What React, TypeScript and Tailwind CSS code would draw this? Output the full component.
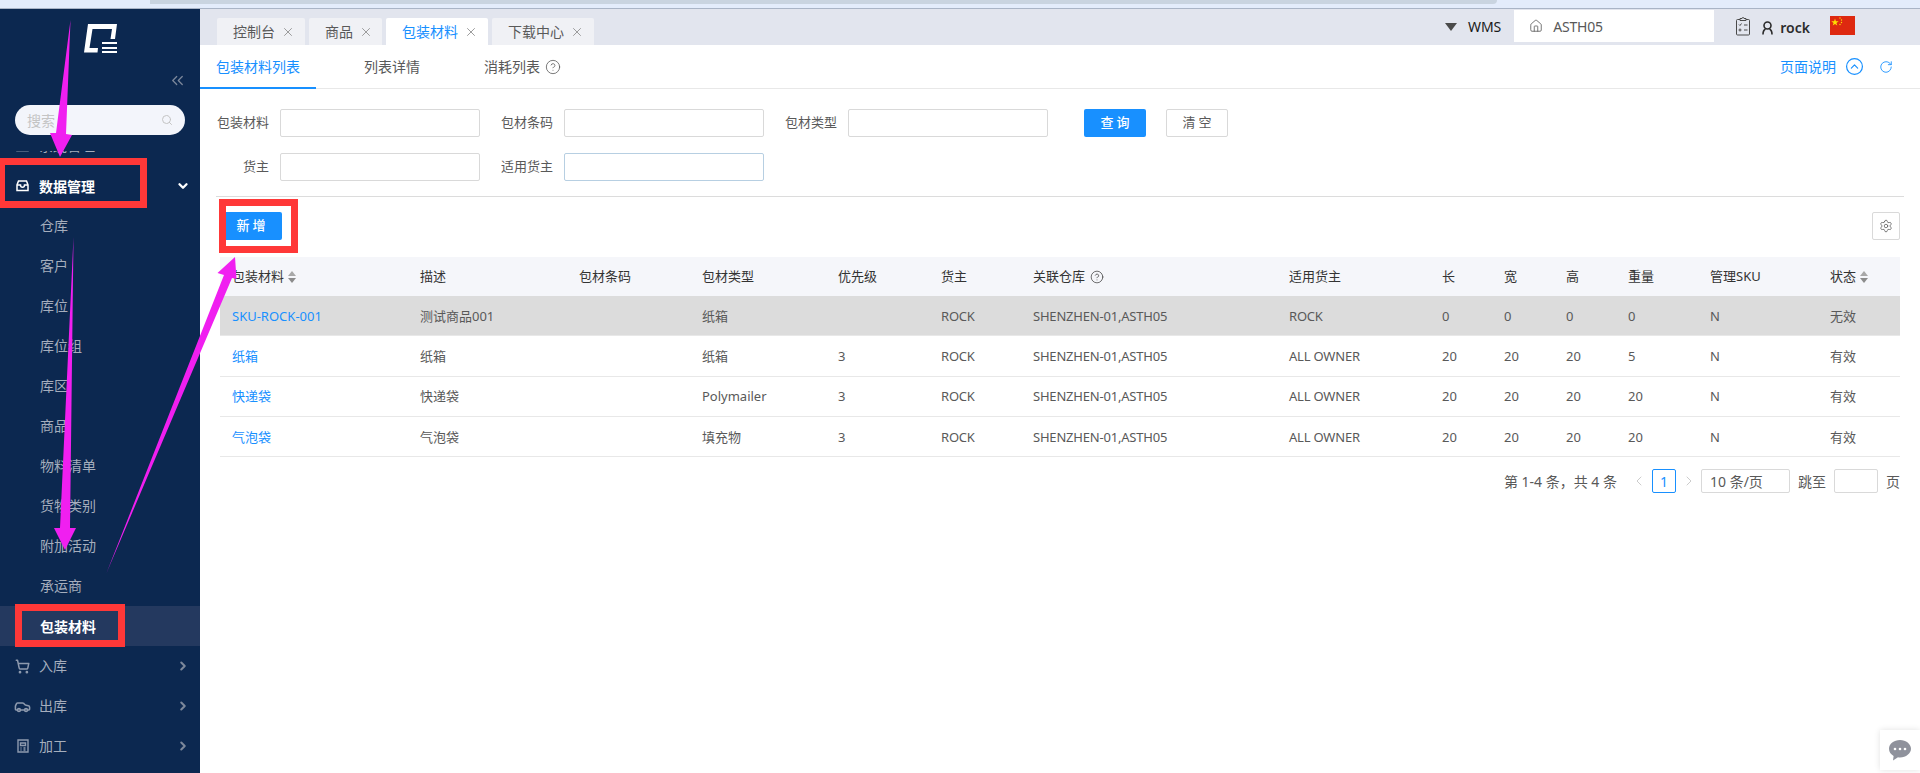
import {
  ChevronDown,
  ChevronLeft,
  ChevronRight,
  ChevronsLeft,
  CircleChevronUp,
  CircleHelp,
  House,
  RotateCw,
  Search,
  Settings,
  ShoppingCart,
  Car,
  X,
} from "lucide-react";

const tabs = [
  { label: "控制台", width: "w-[88px]" },
  { label: "商品", width: "w-[73px]" },
  { label: "包装材料", width: "w-[102px]", active: true },
  { label: "下载中心", width: "w-[102px]" },
];

const subMenu = ["仓库", "客户", "库位", "库位组", "库区", "商品", "物料清单", "货物类别", "附加活动", "承运商"];

const rowGrid =
  "grid grid-cols-[188px_159px_123px_136px_103px_92px_256px_153px_62px_62px_62px_82px_120px_82px] items-center";

const rows = [
  ["SKU-ROCK-001", "测试商品001", "", "纸箱", "", "ROCK", "SHENZHEN-01,ASTH05", "ROCK", "0", "0", "0", "0", "N", "无效"],
  ["纸箱", "纸箱", "", "纸箱", "3", "ROCK", "SHENZHEN-01,ASTH05", "ALL OWNER", "20", "20", "20", "5", "N", "有效"],
  ["快递袋", "快递袋", "", "Polymailer", "3", "ROCK", "SHENZHEN-01,ASTH05", "ALL OWNER", "20", "20", "20", "20", "N", "有效"],
  ["气泡袋", "气泡袋", "", "填充物", "3", "ROCK", "SHENZHEN-01,ASTH05", "ALL OWNER", "20", "20", "20", "20", "N", "有效"],
];

const SortCaret = () => (
  <svg width="8" height="12" viewBox="0 0 8 12" className="ml-[4px] shrink-0">
    <path d="M4 0 8 5H0Z" fill="#a8a8a8" />
    <path d="M4 12 8 7H0Z" fill="#8c8c8c" />
  </svg>
);

const Logo = () => (
  <svg width="34" height="31" viewBox="0 0 34 31">
    <path d="M4 1H33L31 16H26.500L28 6H8.500L5.500 25H14L13.500 29.500H0Z" fill="#fff" />
    <path d="M18 19H33V21H18ZM18 24H33V26H18ZM18 28H33V30H18Z" fill="#fff" />
  </svg>
);

const BoxIcon = () => (
  <svg width="13" height="12" viewBox="0 0 13 12" fill="none" stroke="#fff" strokeWidth="1.500">
    <path d="M2.500 1h8L12 5v5.500H1V5Z" />
    <path d="M1 5h3.500c0 3 4 3 4 0H12" />
  </svg>
);

const FactoryIcon = () => (
  <svg width="12" height="14" viewBox="0 0 12 14" fill="none" stroke="#8e9aae" strokeWidth="1.400">
    <path d="M1 1h10v12H1Z" />
    <path d="M3.500 4h5v2.500h-5ZM3.500 9h1M6.500 9h2M3.500 11h1M6.500 11h2" />
  </svg>
);

const ClipboardIcon = () => (
  <svg width="14" height="19" viewBox="0 0 14 19" fill="none" stroke="#4a4a4a" strokeWidth="1">
    <path d="M4 2.500H1.500a1 1 0 0 0-1 1v13.500a1 1 0 0 0 1 1h11a1 1 0 0 0 1-1V3.500a1 1 0 0 0-1-1H10" />
    <path d="M4 3.500V1.500h2a1 1 0 0 1 2 0h2v2Z" />
    <path d="M3 7.500l1 1 1.500-2M8 8h3.500M3 13a1 1 0 1 0 2 0 1 1 0 1 0-2 0M8 13h3.500" />
  </svg>
);

const UserIcon = () => (
  <svg width="11" height="14" viewBox="0 0 11 14" fill="none" stroke="#2b2b2b" strokeWidth="1.600">
    <circle cx="5.500" cy="4.500" r="3.500" />
    <path d="M1 13.500c0-3 1.500-5 2.500-5.500M10 13.500c0-3-1.500-5-2.500-5.500" />
  </svg>
);

const Flag = () => (
  <svg width="25" height="19" viewBox="0 0 25 19">
    <rect width="25" height="19" fill="#de2910" />
    <path d="M5 2.500 5.900 5.200H8.700L6.400 6.900 7.300 9.600 5 7.900 2.700 9.600 3.600 6.900 1.300 5.200H4.100Z" fill="#ffde00" />
    <circle cx="10" cy="2" r="0.700" fill="#ffde00" />
    <circle cx="11.500" cy="4" r="0.700" fill="#ffde00" />
    <circle cx="11.500" cy="6.500" r="0.700" fill="#ffde00" />
    <circle cx="10" cy="8.500" r="0.700" fill="#ffde00" />
  </svg>
);

const ChatIcon = () => (
  <svg width="22" height="21" viewBox="0 0 22 21">
    <path d="M11 0C5 0 0 3.800 0 8.800c0 3 1.800 5.600 4.600 7.200L4 20.500l5-3.300c.6.1 1.300.2 2 .2 6 0 11-3.800 11-8.600S17 0 11 0Z" fill="#8f929c" />
    <circle cx="6" cy="9" r="1.300" fill="#fff" />
    <circle cx="11" cy="9" r="1.300" fill="#fff" />
    <circle cx="16" cy="9" r="1.300" fill="#fff" />
  </svg>
);

const Field = ({ label, focused = false }: { label: string; focused?: boolean }) => (
  <div className="flex items-center">
    <label className="w-[80px] pr-[11px] text-right text-[13px] text-[#595959]">{label}</label>
    <input className={`w-[200px] h-[28px] border rounded-[2px] bg-white ${focused ? "border-[#b7cfe2]" : "border-[#d9d9d9]"}`} />
  </div>
);

const MenuRow = ({ icon, label }: { icon: React.ReactNode; label: string }) => (
  <div className="h-[40px] flex items-center text-[14px] text-[#a5aebd]">
    <span className="w-[39px] flex justify-center pl-[8px] pr-[2px]">{icon}</span>
    <span className="flex-1 pb-[1px]">{label}</span>
    <ChevronRight size={14} strokeWidth={3.500} className="mr-[10px] text-[#7d889b]" />
  </div>
);

const Sidebar = () => (
  <aside className="w-[200px] shrink-0 bg-[#0c2850] flex flex-col overflow-hidden">
    <div className="h-[57px] flex justify-center pt-[14px] pl-[1px]">
      <Logo />
    </div>
    <div className="h-[28px] flex justify-end items-center pr-[13px]">
      <ChevronsLeft size={19} strokeWidth={1.600} className="text-[#7d889b]" />
    </div>
    <div className="mt-[11px] mx-[15px] h-[30px] rounded-full bg-[#f3f5fb] flex items-center justify-between pl-[12px] pr-[12px]">
      <span className="text-[14px] text-[#c4c4c4]">搜索</span>
      <Search size={12} className="text-[#c4c4c4]" />
    </div>
    <div className="mt-[16px] flex-1 overflow-hidden">
      <div className="-mt-[25px]">
        <MenuRow icon={<BoxIcon />} label="系统管理" />
        <div className="h-[40px] flex items-center text-[14px] font-bold text-white">
          <span className="w-[39px] flex justify-center pl-[8px] pr-[2px]">
            <BoxIcon />
          </span>
          <span className="flex-1">数据管理</span>
          <ChevronDown size={14} strokeWidth={4} className="mr-[10px]" />
        </div>
        {subMenu.map((item) => (
          <div key={item} className="h-[40px] flex items-center pl-[40px] pb-[2px] text-[14px] text-[#a5aebd]">
            {item}
          </div>
        ))}
        <div className="h-[40px] flex items-center pl-[40px] text-[14px] font-bold text-white bg-[#24395f]">包装材料</div>
        <MenuRow icon={<ShoppingCart size={15} strokeWidth={2.400} className="text-[#8e9aae]" />} label="入库" />
        <MenuRow icon={<Car size={17} strokeWidth={2.200} className="text-[#8e9aae]" />} label="出库" />
        <MenuRow icon={<FactoryIcon />} label="加工" />
      </div>
    </div>
  </aside>
);

const TopBar = () => (
  <div className="h-[36px] shrink-0 bg-[#e2e5ee] flex justify-between">
    <div className="flex items-end pl-[17px] gap-[4px]">
      {tabs.map((t) => (
        <div
          key={t.label}
          className={`${t.width} h-[27px] pl-[16px] flex items-center gap-[6px] text-[14px] rounded-t-[2px] ${
            t.active ? "bg-white text-[#1890ff]" : "bg-[#f0f1f5] text-[#595959]"
          }`}
        >
          {t.label}
          <X size={14} strokeWidth={1.500} className="text-[#8f8f8f]" />
        </div>
      ))}
    </div>
    <div className="flex items-start pr-[65px]">
      <div className="mt-[14px] w-0 h-0 border-x-[6px] border-x-transparent border-t-[8px] border-t-[#4a4a4a]" />
      <span className="ml-[11px] mt-[8px] text-[14px] leading-[20px] text-[#1a1a1a]">WMS</span>
      <div className="ml-[13px] mt-[1px] w-[200px] h-[32px] bg-white flex items-center pl-[15px] gap-[10px] text-[14px] tracking-[-0.2px] text-[#595959]">
        <House size={14} strokeWidth={1.400} />
        ASTH05
      </div>
      <div className="ml-[22px] mt-[8px]">
        <ClipboardIcon />
      </div>
      <div className="ml-[12px] mt-[12px]">
        <UserIcon />
      </div>
      <span className="ml-[7px] mt-[9px] text-[14px] leading-[20px] font-semibold text-[#2b2b2b]">rock</span>
      <div className="ml-[20px] mt-[7px]">
        <Flag />
      </div>
    </div>
  </div>
);

const SubTabs = () => (
  <div className="h-[44px] shrink-0 border-b-[1px] border-[#e8e8e8] flex items-stretch text-[14px] text-[#595959]">
    <div className="w-[116px] h-[44px] border-b-[2px] border-[#1890ff] text-[#1890ff] flex items-center justify-center">
      包装材料列表
    </div>
    <div className="ml-[48px] h-[43px] flex items-center">列表详情</div>
    <div className="ml-[64px] h-[43px] flex items-center gap-[5px]">
      消耗列表
      <CircleHelp size={16} strokeWidth={1.200} />
    </div>
    <div className="ml-auto h-[43px] flex items-center pr-[27px] text-[#1890ff]">
      <span className="pl-[1px]">页面说明</span>
      <CircleChevronUp size={19} strokeWidth={1.500} className="ml-[9px]" />
      <RotateCw size={14} strokeWidth={1.500} className="ml-[15px]" />
    </div>
  </div>
);

const SearchForm = () => (
  <div className="shrink-0 pt-[20px] pb-[15px] grid grid-cols-[284px_284px_284px_1fr] gap-y-[16px]">
    <Field label="包装材料" />
    <Field label="包材条码" />
    <Field label="包材类型" />
    <div className="flex pl-[32px] gap-[20px] text-[13px]">
      <button className="w-[62px] h-[28px] pl-[3px] rounded-[2px] bg-[#1890ff] text-white font-medium tracking-[3px]">查询</button>
      <button className="w-[62px] h-[28px] pl-[3px] rounded-[2px] border border-[#d9d9d9] text-[#595959] tracking-[3px]">清空</button>
    </div>
    <Field label="货主" />
    <Field label="适用货主" focused />
  </div>
);

const headers = ["包装材料", "描述", "包材条码", "包材类型", "优先级", "货主", "关联仓库", "适用货主", "长", "宽", "高", "重量", "管理SKU", "状态"];

const DataTable = () => (
  <div className="mx-[20px] text-[13px]">
    <div className={`${rowGrid} h-[39px] bg-[#f5f6fa] text-[#333]`}>
      {headers.map((h) => (
        <div key={h} className="pl-[12px] flex items-center">
          {h}
          {(h === "包装材料" || h === "状态") && <SortCaret />}
          {h === "关联仓库" && <CircleHelp size={14} strokeWidth={1.200} className="ml-[5px]" />}
        </div>
      ))}
    </div>
    {rows.map((row, i) => (
      <div
        key={row[0]}
        className={`${rowGrid} h-[40.250px] border-b border-[#e8e8e8] text-[#595959] ${i === 0 ? "bg-[#dcdcdc]" : "bg-white"}`}
      >
        {row.map((cell, j) => (
          <div
            key={j}
            className={`pl-[12px] pt-[2px] ${j === 0 ? "text-[#1890ff]" : ""} ${j >= 5 && j <= 7 ? "tracking-[-0.2px]" : ""}`}
          >
            {cell}
          </div>
        ))}
      </div>
    ))}
  </div>
);

const Pagination = () => (
  <div className="mx-[20px] mt-[12px] h-[24px] flex items-center justify-end text-[14px] text-[#595959]">
    <span>第 1-4 条，共 4 条</span>
    <ChevronLeft size={16} strokeWidth={1.200} className="ml-[14px] text-[#bfbfbf]" />
    <span className="ml-[5px] w-[24px] h-[24px] border border-[#1890ff] rounded-[2px] text-[#1890ff] flex items-center justify-center">1</span>
    <ChevronRight size={16} strokeWidth={1.200} className="ml-[5px] text-[#bfbfbf]" />
    <span className="ml-[4px] w-[89px] h-[24px] border border-[#d9d9d9] rounded-[2px] pl-[8px] flex items-center">10 条/页</span>
    <span className="ml-[8px]">跳至</span>
    <span className="ml-[8px] w-[44px] h-[24px] border border-[#d9d9d9] rounded-[2px]" />
    <span className="ml-[8px] w-[14px]">页</span>
  </div>
);

const Annotations = () => (
  <>
    <div className="absolute left-0 top-[158px] w-[147px] h-[50px] border-[7px] border-l-[5px] border-[#ff3838]" />
    <div className="absolute left-[15px] top-[604px] w-[110px] h-[43px] border-[7px] border-[#ff3838]" />
    <div className="absolute left-[219px] top-[199px] w-[79px] h-[54px] border-[7px] border-[#ff3838]" />
    <svg className="absolute left-0 top-0 pointer-events-none" width="1920" height="773" viewBox="0 0 1920 773">
      <g fill="#f01ff0">
        <path d="M70.500 20 66 134 72 135 60 157 50 133 56 133Z" />
        <path d="M73.500 237 70 528 76 528 65 550 54 528 60 528Z" />
        <path d="M106.500 573 232 278 236.500 279 235 257 217.500 273 224 275Z" />
      </g>
    </svg>
  </>
);

export default function App() {
  return (
    <div className="relative w-[1920px] h-[773px] overflow-hidden bg-white flex flex-col font-['Noto_Sans','Noto_Sans_CJK_SC',sans-serif]">
      <div className="h-[9px] shrink-0 bg-[#e3ecfb] border-b border-[#a9b4c6] flex items-start pl-[150px] pr-[423px]">
        <div className="flex-1 h-[4px] bg-[#c9d4e0] rounded-br-[6px]" />
      </div>
      <div className="flex flex-1 min-h-0">
        <Sidebar />
        <main className="flex-1 flex flex-col min-w-0">
          <TopBar />
          <SubTabs />
          <SearchForm />
          <div className="mx-[16px] h-px bg-[#dcdcdc] shrink-0" />
          <div className="pt-[15px] pb-[17px] px-[20px] flex justify-between shrink-0">
            <button className="w-[62px] h-[28px] pl-[3px] rounded-[2px] bg-[#1890ff] text-white font-medium text-[13px] tracking-[3px]">新增</button>
            <button className="w-[28px] h-[28px] rounded-[2px] border border-[#d9d9d9] flex items-center justify-center text-[#595959]">
              <Settings size={14} strokeWidth={1.300} />
            </button>
          </div>
          <DataTable />
          <Pagination />
        </main>
      </div>
      <Annotations />
      <div className="absolute right-0 top-[730px] w-[40px] h-[40px] bg-white shadow-[0_0_6px_rgba(0,0,0,0.12)] flex items-center justify-center">
        <ChatIcon />
      </div>
    </div>
  );
}
